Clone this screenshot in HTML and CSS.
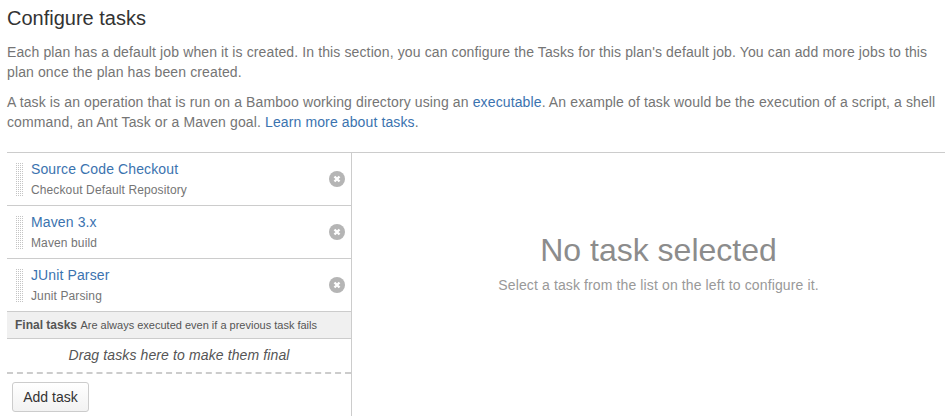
FILE: index.html
```html
<!DOCTYPE html>
<html lang="en">
<head>
    <meta charset="UTF-8">
    <title>Configure tasks</title>
    <link rel="stylesheet" href="styles.css">
</head>
<body>
    <h2 class="title">Configure tasks</h2>
    <p class="intro">Each plan has a default job when it is created. In this section, you can configure the Tasks for this plan's default job. You can add more jobs to this plan once the plan has been created.</p>
    <p class="intro">A task is an operation that is run on a Bamboo working directory using an <a href="#">executable</a>. An example of task would be the execution of a script, a shell command, an Ant Task or a Maven goal. <a href="#">Learn more about tasks</a>.</p>

    <div class="config">
        <div class="sidebar">
            <ul class="tasks">
                <li class="task">
                    <span class="grip"></span>
                    <div class="task-text">
                        <a class="task-name" href="#">Source Code Checkout</a>
                        <span class="task-desc">Checkout Default Repository</span>
                    </div>
                    <svg class="remove" viewBox="0 0 16 16"><circle cx="8" cy="8" r="8" fill="#b5b5b5"/><path d="M5.5 5.5l5 5M10.5 5.5l-5 5" stroke="#fff" stroke-width="2.4"/></svg>
                </li>
                <li class="task">
                    <span class="grip"></span>
                    <div class="task-text">
                        <a class="task-name" href="#">Maven 3.x</a>
                        <span class="task-desc">Maven build</span>
                    </div>
                    <svg class="remove" viewBox="0 0 16 16"><circle cx="8" cy="8" r="8" fill="#b5b5b5"/><path d="M5.5 5.5l5 5M10.5 5.5l-5 5" stroke="#fff" stroke-width="2.4"/></svg>
                </li>
                <li class="task">
                    <span class="grip"></span>
                    <div class="task-text">
                        <a class="task-name" href="#">JUnit Parser</a>
                        <span class="task-desc">Junit Parsing</span>
                    </div>
                    <svg class="remove" viewBox="0 0 16 16"><circle cx="8" cy="8" r="8" fill="#b5b5b5"/><path d="M5.5 5.5l5 5M10.5 5.5l-5 5" stroke="#fff" stroke-width="2.4"/></svg>
                </li>
            </ul>
            <div class="final-head"><strong>Final tasks</strong> <small>Are always executed even if a previous task fails</small></div>
            <div class="final-drop">Drag tasks here to make them final</div>
            <div class="actions"><button type="button">Add task</button></div>
        </div>
        <div class="empty">
            <h3>No task selected</h3>
            <p>Select a task from the list on the left to configure it.</p>
        </div>
    </div>
</body>
</html>
```

FILE: styles.css
```css
html {
    overflow: hidden;
}

body {
    font-family: "Liberation Sans", Arial, sans-serif;
    font-size: 14px;
    line-height: 20px;
    letter-spacing: 0.12px;
    color: #757575;
    margin: 0;
    padding: 0 3px 0 7px;
    height: 416px;
    overflow: hidden;
    background-color: #ffffff;
}

a {
    color: #3b73af;
    text-decoration: none;
}

.title {
    font-size: 20px;
    font-weight: normal;
    line-height: 24px;
    letter-spacing: 0;
    color: #333333;
    margin: 0;
    padding-top: 6px;
}

.intro {
    margin: 12px 0 0;
}

.intro + .intro {
    margin-top: 10px;
}

.config {
    display: flex;
    margin-top: 20px;
    border-top: 1px solid #cccccc;
    height: 263px;
}

.sidebar {
    width: 344px;
    border-right: 1px solid #cccccc;
}

.tasks {
    list-style: none;
    margin: 0;
    padding: 0;
}

.task {
    display: flex;
    align-items: center;
    height: 52px;
    border-bottom: 1px solid #cccccc;
    padding: 0 6px 0 8px;
}

.grip {
    width: 8px;
    height: 34px;
    margin-right: 8px;
    background-color: #c4c4c4;
    background-image: linear-gradient(#ffffff 1px, transparent 1px), linear-gradient(90deg, #ffffff 1px, transparent 1px);
    background-size: 2px 2px;
}

.task-text {
    flex: 1;
    display: flex;
    flex-direction: column;
}

.task-name {
    font-size: 14px;
    line-height: 20px;
}

.task-desc {
    font-size: 12px;
    line-height: 20px;
    margin-top: 1px;
}

.remove {
    width: 16px;
    height: 16px;
}

.final-head {
    background-color: #f0f0f0;
    border-bottom: 1px solid #cccccc;
    height: 26px;
    line-height: 26px;
    padding-left: 8px;
    color: #555555;
    font-size: 12px;
    letter-spacing: 0;
}

.final-head small {
    font-size: 11px;
}

.final-drop {
    height: 33px;
    line-height: 33px;
    text-align: center;
    font-style: italic;
    font-size: 14px;
    color: #555555;
    border-bottom: 2px dashed #cccccc;
}

.actions {
    padding: 8px 5px;
}

button {
    font-family: inherit;
    font-size: 14px;
    color: #333333;
    width: 77px;
    height: 30px;
    padding: 0;
    border: 1px solid #cccccc;
    border-radius: 3px;
    background: linear-gradient(#ffffff, #f2f2f2);
}

.empty {
    flex: 1;
    text-align: center;
    color: #999999;
    padding: 79px 0 0 20px;
}

.empty h3 {
    font-size: 32px;
    font-weight: normal;
    line-height: 36px;
    letter-spacing: 0;
    color: #8c8c8c;
    margin: 0;
}

.empty p {
    margin: 7px 0 0;
}
```
